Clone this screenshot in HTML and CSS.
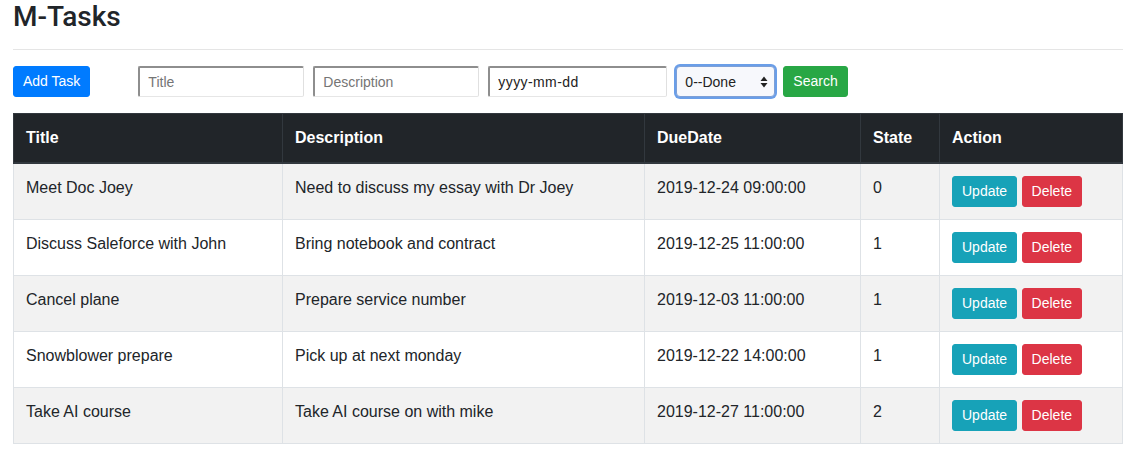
FILE: index.html
```html
<!DOCTYPE html>
<html lang="en">
<head>
<meta charset="utf-8">
<title>M-Tasks</title>
<link rel="stylesheet" href="styles.css">
</head>
<body>
<div class="page">
  <h3 class="brand">M-Tasks</h3>
  <hr class="rule">
  <div class="toolbar">
    <button class="btn btn-primary">Add Task</button>
    <div class="filters">
      <input class="field field-title" type="text" placeholder="Title">
      <input class="field field-desc" type="text" placeholder="Description">
      <input class="field field-date" type="text" value="yyyy-mm-dd">
      <span class="select-wrap">
        <select class="picker">
          <option>0--Done</option>
          <option>1--Doing</option>
          <option>2--Todo</option>
        </select>
        <svg class="select-arrows" width="8" height="12" viewBox="0 0 8 12"><path d="M4 0.5 L7.5 5 L0.5 5 Z M4 11.5 L7.5 7 L0.5 7 Z" fill="#222"/></svg>
      </span>
      <button class="btn btn-success">Search</button>
    </div>
  </div>
  <table class="tasks">
    <thead>
      <tr>
        <th class="c-title">Title</th>
        <th class="c-desc">Description</th>
        <th class="c-due">DueDate</th>
        <th class="c-state">State</th>
        <th class="c-action">Action</th>
      </tr>
    </thead>
    <tbody>
      <tr>
        <td>Meet Doc Joey</td>
        <td>Need to discuss my essay with Dr Joey</td>
        <td>2019-12-24 09:00:00</td>
        <td>0</td>
        <td><button class="btn btn-info">Update</button> <button class="btn btn-danger">Delete</button></td>
      </tr>
      <tr>
        <td>Discuss Saleforce with John</td>
        <td>Bring notebook and contract</td>
        <td>2019-12-25 11:00:00</td>
        <td>1</td>
        <td><button class="btn btn-info">Update</button> <button class="btn btn-danger">Delete</button></td>
      </tr>
      <tr>
        <td>Cancel plane</td>
        <td>Prepare service number</td>
        <td>2019-12-03 11:00:00</td>
        <td>1</td>
        <td><button class="btn btn-info">Update</button> <button class="btn btn-danger">Delete</button></td>
      </tr>
      <tr>
        <td>Snowblower prepare</td>
        <td>Pick up at next monday</td>
        <td>2019-12-22 14:00:00</td>
        <td>1</td>
        <td><button class="btn btn-info">Update</button> <button class="btn btn-danger">Delete</button></td>
      </tr>
      <tr>
        <td>Take AI course</td>
        <td>Take AI course on with mike</td>
        <td>2019-12-27 11:00:00</td>
        <td>2</td>
        <td><button class="btn btn-info">Update</button> <button class="btn btn-danger">Delete</button></td>
      </tr>
    </tbody>
  </table>
</div>
</body>
</html>
```
FILE: styles.css
```css
* { box-sizing: border-box; }
html, body { margin: 0; padding: 0; background: #fff; }
body {
  font-family: "Liberation Sans", Arial, sans-serif;
  font-size: 16px;
  line-height: 1.5;
  color: #212529;
}
.page { padding: 0 13px; }
.brand {
  margin: 0;
  font-family: Roboto, "Liberation Sans", Arial, sans-serif;
  font-size: 28px;
  font-weight: 500;
  line-height: 34px;
}
.rule {
  margin: 15px 0 16px;
  border: 0;
  border-top: 1px solid rgba(0,0,0,0.1);
  height: 0;
}
.toolbar {
  display: flex;
  align-items: center;
  gap: 48px;
  height: 31px;
}
.filters {
  display: flex;
  align-items: center;
  gap: 9px;
}
.btn {
  font-family: inherit;
  font-size: 14px;
  line-height: 21px;
  padding: 4px 9px;
  border: 1px solid transparent;
  border-radius: 3px;
  color: #fff;
  cursor: pointer;
  vertical-align: middle;
}
.btn-primary { background: #007bff; border-color: #007bff; }
.btn-success { background: #28a745; border-color: #28a745; }
.btn-info { background: #17a2b8; border-color: #17a2b8; }
.btn-danger { background: #dc3545; border-color: #dc3545; }
.filters .btn-success { margin-left: -1px; }
.field {
  height: 31px;
  font-family: inherit;
  font-size: 14px;
  color: #222;
  padding: 0 8px;
  background: #fff;
  border-style: solid;
  border-width: 2px 1px 1px 2px;
  border-color: #8e8e8e #e0e0e0 #e6e6e6 #8e8e8e;
  border-radius: 2px;
  outline: none;
}
.field::placeholder { color: #757575; }
.field-title, .field-desc { width: 166px; }
.field-date { width: 179px; letter-spacing: 0.4px; }
.select-wrap {
  position: relative;
  display: inline-block;
}
.picker {
  appearance: none;
  -webkit-appearance: none;
  width: 99px;
  height: 31px;
  font-family: inherit;
  font-size: 14px;
  color: #222;
  padding: 0 8px;
  background: #f7f8fc;
  border: 1px solid #7d9fd6;
  border-radius: 4px;
  box-shadow: 0 0 0 2px #6a9ee8;
  outline: none;
}
.select-arrows {
  position: absolute;
  right: 7px;
  top: 10px;
  pointer-events: none;
}
.tasks {
  margin-top: 16px;
  width: 100%;
  border-collapse: collapse;
  border: 1px solid #dee2e6;
}
.tasks th, .tasks td {
  padding: 12px;
  text-align: left;
  vertical-align: top;
  border: 1px solid #dee2e6;
}
.tasks thead th {
  background: #212529;
  color: #fff;
  font-weight: 700;
  border-color: #32383e;
  border-bottom: 2px solid #32383e;
}
.tasks tbody tr:nth-child(odd) { background: rgba(0,0,0,0.05); }
.tasks td .btn { margin: 0; }
.c-title { width: 269px; }
.c-desc { width: 362px; }
.c-due { width: 216px; }
.c-state { width: 79px; }
```
